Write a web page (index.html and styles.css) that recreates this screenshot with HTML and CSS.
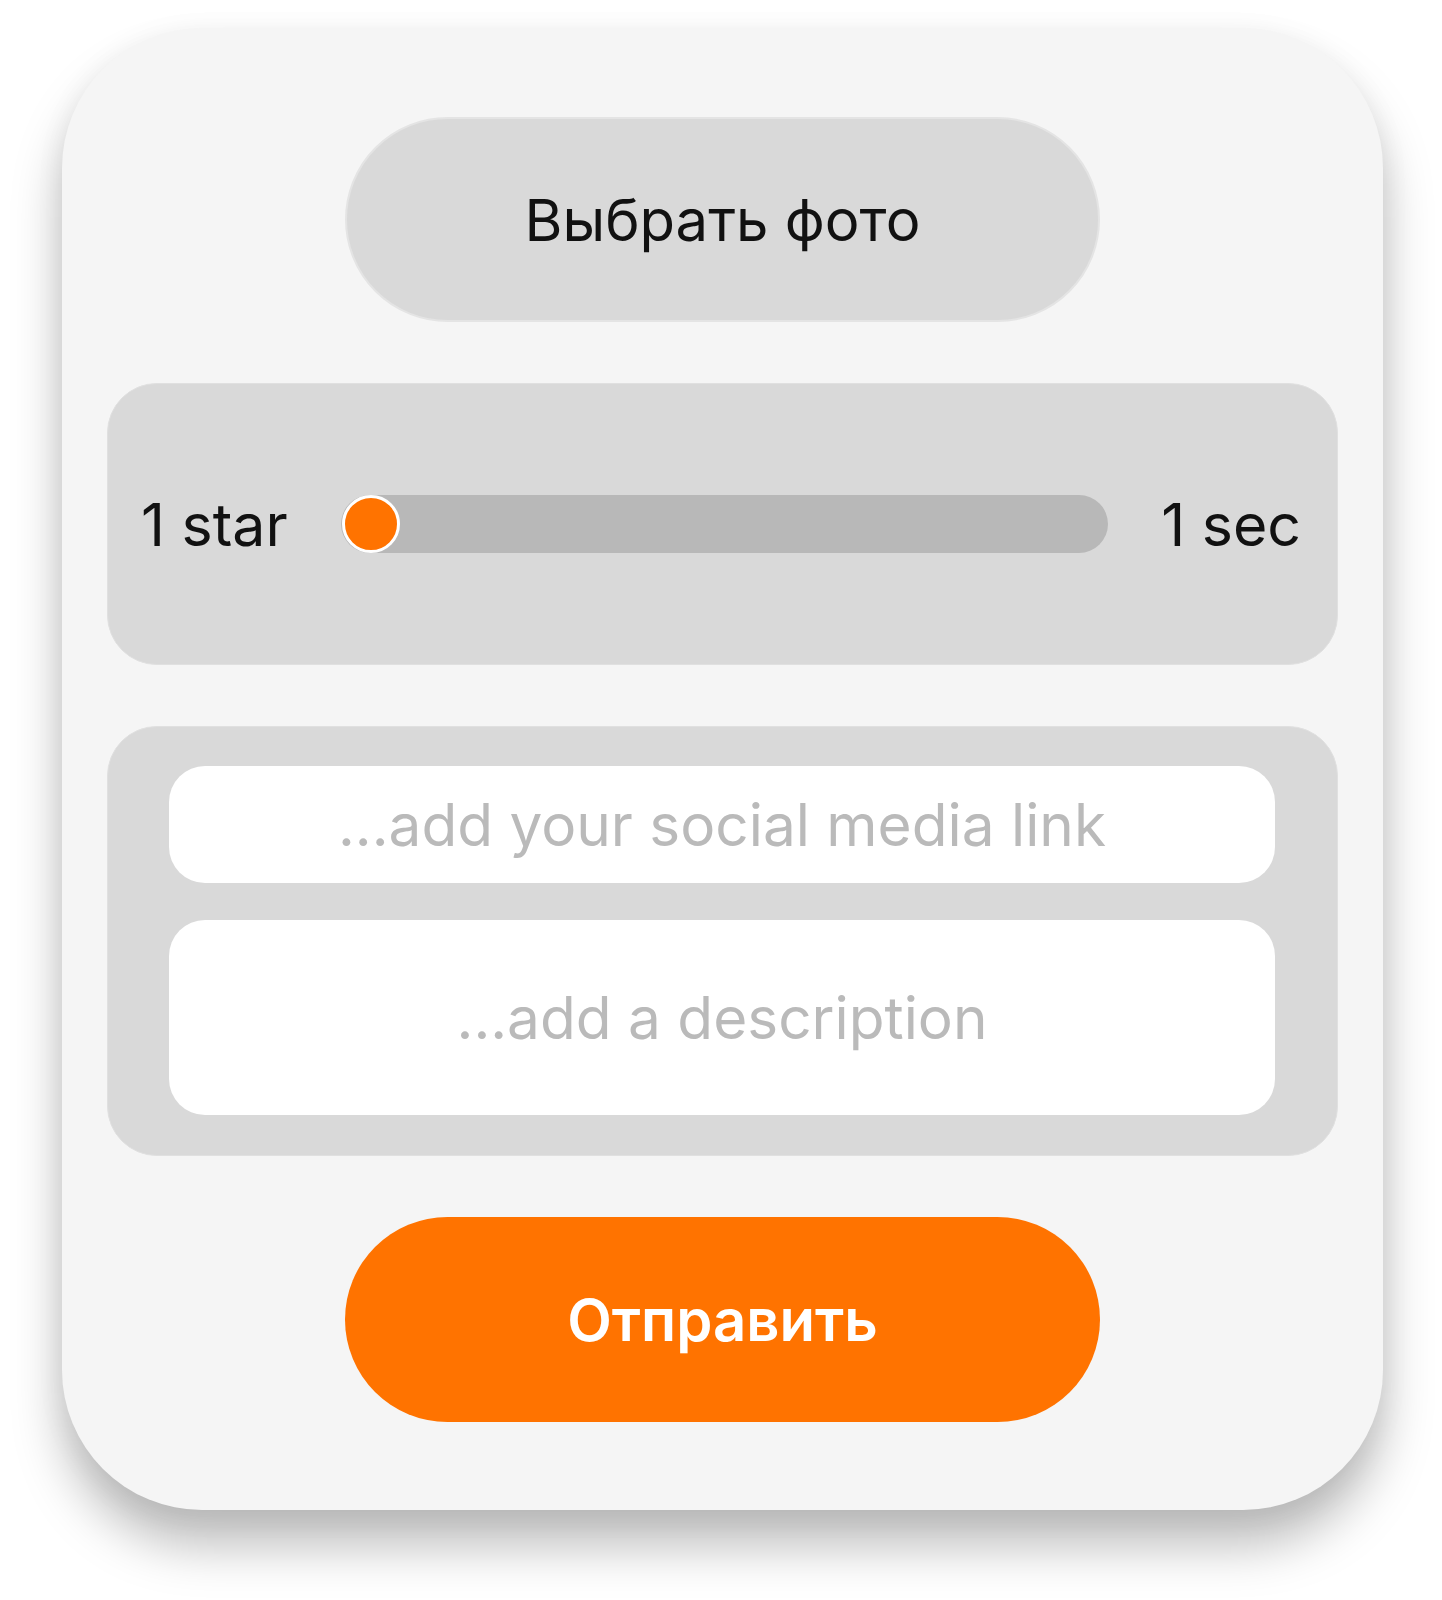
FILE: index.html
```html
<!DOCTYPE html>
<html lang="ru">
<head>
<meta charset="utf-8">
<title>Form</title>
<link rel="stylesheet" href="styles.css">
</head>
<body>
<div class="card">
  <button class="pill pill-grey" type="button">Выбрать фото</button>

  <div class="panel slider-panel">
    <span class="slider-label">1 star</span>
    <div class="track">
      <span class="thumb"></span>
    </div>
    <span class="slider-label">1 sec</span>
  </div>

  <div class="panel fields-panel">
    <input class="field field-link" type="text" placeholder="...add your social media link">
    <textarea class="field field-desc" placeholder="...add a description"></textarea>
  </div>

  <button class="pill pill-orange" type="button">Отправить</button>
</div>
</body>
</html>
```
FILE: styles.css
```css
* {
  box-sizing: border-box;
}

html, body {
  margin: 0;
  padding: 0;
  background: #ffffff;
}

body {
  font-family: Inter, "Noto Sans", "Liberation Sans", sans-serif;
  color: #111111;
  padding: 28px 0 0 62px;
  min-height: 1600px;
}

.card {
  width: 1321px;
  height: 1482px;
  background: #f5f5f5;
  border-radius: 140px;
  box-shadow: 0 36px 50px rgba(0, 0, 0, 0.26), 0 6px 30px rgba(0, 0, 0, 0.06);
  padding: 89px 45px 87px;
  display: flex;
  flex-direction: column;
  align-items: center;
  gap: 61px;
}

.pill {
  width: 755px;
  height: 205px;
  border-radius: 103px;
  font-family: inherit;
  cursor: pointer;
  flex: none;
}

.pill-grey {
  background: #d9d9d9;
  border: 2px solid #e4e4e4;
  color: #111111;
  font-size: 58px;
  font-weight: 400;
}

.pill-orange {
  background: #ff7300;
  border: none;
  color: #ffffff;
  font-size: 58px;
  font-weight: 600;
}

.panel {
  width: 100%;
  background: #d9d9d9;
  border-radius: 50px;
  border: 1px solid #e0e0e0;
  flex: none;
}

.slider-panel {
  height: 282px;
  display: flex;
  align-items: center;
  padding: 0 36px 0 33px;
  gap: 53px;
}

.slider-label {
  font-size: 59px;
  line-height: 1;
  white-space: nowrap;
  flex: none;
}

.track {
  position: relative;
  flex: 1;
  height: 58px;
  border-radius: 29px;
  background: #b8b8b8;
}

.thumb {
  position: absolute;
  left: 1px;
  top: 0;
  width: 58px;
  height: 58px;
  border-radius: 50%;
  background: #ff7300;
  border: 3px solid #ffffff;
}

.fields-panel {
  height: 430px;
  padding: 39px 62px 40px 61px;
  display: flex;
  flex-direction: column;
  gap: 37px;
}

.field {
  width: 100%;
  background: #ffffff;
  border: none;
  outline: none;
  border-radius: 36px;
  font-family: inherit;
  font-size: 58.5px;
  color: #111111;
  text-align: center;
  flex: none;
}

.field::placeholder {
  color: #bababa;
  opacity: 1;
}

.field-link {
  height: 117px;
  padding: 0 10px;
}

.field-desc {
  height: 195px;
  padding: 63px 10px 0;
  resize: none;
  line-height: 1.21;
  overflow: hidden;
}
```
